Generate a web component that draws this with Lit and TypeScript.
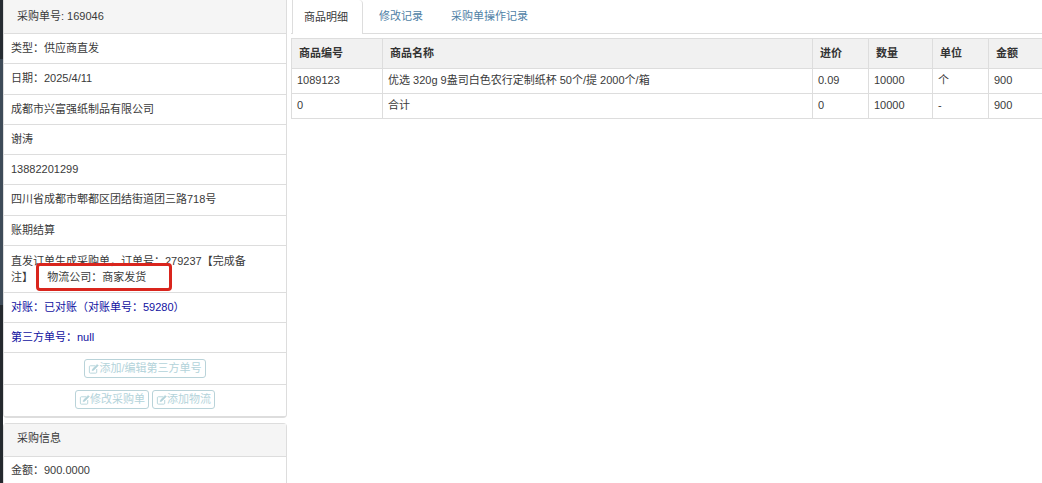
import { LitElement, html, css, svg } from "lit";
import { customElement } from "lit/decorators.js";

const editIcon = svg`<svg class="ico" viewBox="0 0 12 12" width="11" height="12" fill="none" stroke="currentColor" stroke-width="1"><path d="M8 2.5H2.5a1 1 0 0 0-1 1v6a1 1 0 0 0 1 1h6a1 1 0 0 0 1-1V6"/><path d="M4.5 7.8l.4-1.8L10 1l1.3 1.3-5 5z" fill="currentColor" stroke-width=".6"/></svg>`;

@customElement("app-root")
export class AppRoot extends LitElement {
  static styles = css`
    :host {
      display: flex;
      width: 1042px;
      height: 483px;
      overflow: hidden;
      background: #fff;
      font: 11px/17.3px "Liberation Sans", "Noto Sans CJK SC", sans-serif;
      color: #3a3a3a;
    }
    .strip { width: 3px; flex: none; display: flex; flex-direction: column; background: #24292e; }
    .strip .top { height: 59px; background: #262c32; }
    .strip .mid { height: 246px; background: #3e4b58; }
    .left { width: 284px; flex: none; display: flex; flex-direction: column; gap: 5px; }
    .panel { position: relative; border: 1px solid #ddd; border-top: 0; border-radius: 0 0 4px 4px; }
    .panel.second { border-top: 1px solid #ddd; border-radius: 4px 4px 0 0; border-bottom: 0; }
    .head {
      height: 33px; box-sizing: border-box; padding: 5.5px 13px; background: #f5f5f5;
      border-bottom: 1px solid #ddd; line-height: 17px;
    }
    .panel.first .head { height: 34px; padding-top: 8px; }
    .row { padding: 6px 7px; border-bottom: 1px solid #ddd; }
    .row.two { line-height: 16.3px; padding-top: 6.5px; padding-bottom: 6.5px; }
    .row.amount { padding-top: 4.5px; }
    .row:last-child { border-bottom: 0; }
    .blue { color: #10109f; }
    .carrier { margin-left: 5px; }
    .btns { display: flex; justify-content: center; gap: 3px; padding: 6px 8px; }
    .btns.b { padding: 5px 8px 7px; }
    button {
      display: inline-flex; align-items: center; height: 19px; box-sizing: border-box;
      padding: 0 3px; margin: 0; background: #fff; border: 1px solid #b9d3d9; border-radius: 3px;
      font: inherit; color: #b3d3da;
    }
    .ico { flex: none; }
    .mark {
      position: absolute; left: 32px; top: 263px; width: 136px; height: 28px; box-sizing: border-box;
      border: 3px solid #d9251d; border-radius: 4px; pointer-events: none;
    }
    .main { flex: 1; min-width: 0; padding-left: 4px; }
    .tabs { display: flex; height: 34px; box-sizing: border-box; border-bottom: 1px solid #ddd; padding-left: 1px; }
    .tab { padding: 8px 14px 0; color: #4f7fa6; height: 34px; box-sizing: border-box; }
    .tab.on {
      position: relative; color: #3a3a3a; background: #fff; border: 1px solid #ddd; border-top: 0; border-bottom: 0;
      border-radius: 0 4px 0 0; padding: 9px 14px 0 11px; margin-right: 2px;
    }
    .tab.on::after { content: ""; position: absolute; left: 0; right: 0; bottom: -1px; height: 1px; background: #fff; }
    table {
      margin-top: 4px; border-collapse: collapse; table-layout: fixed; width: 752px;
    }
    th, td { border: 1px solid #ddd; padding: 3px 5px; text-align: left; font-weight: normal; height: 18px; box-sizing: content-box; }
    th { background: #f1f1f1; height: 23px; padding: 3px 7px; font-weight: 700; color: #333; }
    td { color: #3a3a3a; }
  `;

  render() {
    return html`
      <div class="strip"><div class="top"></div><div class="mid"></div></div>
      <div class="left">
        <section class="panel first">
          <div class="head">采购单号: 169046</div>
          <div class="row">类型：供应商直发</div>
          <div class="row">日期：2025/4/11</div>
          <div class="row">成都市兴富强纸制品有限公司</div>
          <div class="row">谢涛</div>
          <div class="row">13882201299</div>
          <div class="row">四川省成都市郫都区团结街道团三路718号</div>
          <div class="row">账期结算</div>
          <div class="row two">直发订单生成采购单，订单号：279237【完成备注】&nbsp;&nbsp;&nbsp;<span class="carrier">物流公司：商家发货</span></div>
          <div class="row blue">对账：已对账（对账单号：59280）</div>
          <div class="row blue">第三方单号：null</div>
          <div class="row btns"><button>${editIcon}添加/编辑第三方单号</button></div>
          <div class="row btns b"><button>${editIcon}修改采购单</button><button>${editIcon}添加物流</button></div>
          <div class="mark"></div>
        </section>
        <section class="panel second">
          <div class="head">采购信息</div>
          <div class="row amount">金额：900.0000</div>
        </section>
      </div>
      <div class="main">
        <nav class="tabs">
          <div class="tab on">商品明细</div>
          <div class="tab">修改记录</div>
          <div class="tab">采购单操作记录</div>
        </nav>
        <table>
          <colgroup>
            <col style="width:91px" /><col style="width:430px" /><col style="width:56px" />
            <col style="width:64px" /><col style="width:56px" /><col style="width:55px" />
          </colgroup>
          <thead>
            <tr><th>商品编号</th><th>商品名称</th><th>进价</th><th>数量</th><th>单位</th><th>金额</th></tr>
          </thead>
          <tbody>
            <tr><td>1089123</td><td>优选 320g 9盎司白色农行定制纸杯 50个/提 2000个/箱</td><td>0.09</td><td>10000</td><td>个</td><td>900</td></tr>
            <tr><td>0</td><td>合计</td><td>0</td><td>10000</td><td>-</td><td>900</td></tr>
          </tbody>
        </table>
      </div>
    `;
  }
}
